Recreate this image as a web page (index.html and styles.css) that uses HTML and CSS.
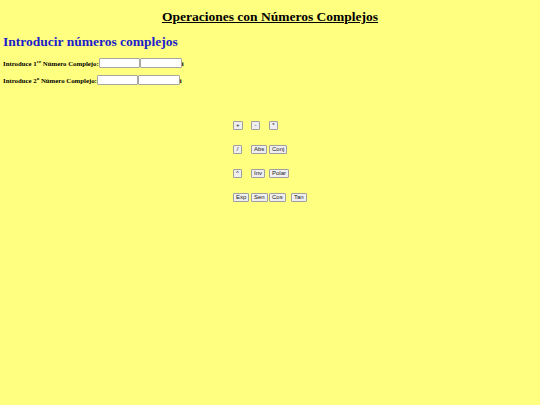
FILE: index.html
```html
<!DOCTYPE html>
<html lang="es">

<head>
  <meta charset="UTF-8">
  <title>Operaciones con Números Complejos</title>
  <link rel="stylesheet" href="styles.css">
</head>

<body>
  <h1 class="titulo">Operaciones con Números Complejos</h1>
  <h2 class="subtitulo">Introducir números complejos</h2>

  <form class="numeros">
    <div class="fila">
      <label>Introduce 1<sup>er</sup> Número Complejo:</label><input type="text"><input type="text"><span>i</span>
    </div>
    <div class="fila">
      <label>Introduce 2<sup>o</sup> Número Complejo:</label><input type="text"><input type="text"><span>i</span>
    </div>
  </form>

  <div class="botones">
    <div class="linea">
      <button type="button">+</button>
      <button type="button">-</button>
      <button type="button">*</button>
    </div>
    <div class="linea">
      <button type="button">/</button>
      <button type="button">Abs</button>
      <button type="button">Conj</button>
    </div>
    <div class="linea">
      <button type="button">^</button>
      <button type="button">Inv</button>
      <button type="button">Polar</button>
    </div>
    <div class="linea">
      <button type="button">Exp</button>
      <button type="button">Sen</button>
      <button type="button">Cos</button>
      <button type="button">Tan</button>
    </div>
  </div>
</body>

</html>
```

FILE: styles.css
```css
body {
  margin: 0;
  height: 405px;
  overflow: hidden;
  background-color: #ffff80;
  color: #000;
  font-family: "Liberation Serif", serif;
}

.titulo {
  margin: 0;
  padding-top: 9px;
  font-size: 13.5px;
  line-height: 16px;
  text-align: center;
  text-decoration: underline;
}

.subtitulo {
  margin: 0;
  padding: 9px 0 0 3px;
  font-size: 13.5px;
  line-height: 16px;
  color: #1c1ccc;
}

.numeros {
  padding: 8px 0 0 3px;
}

.fila {
  display: flex;
  align-items: center;
  height: 10px;
  margin-bottom: 7px;
  font-size: 6.8px;
  font-weight: bold;
}

.fila sup {
  font-size: 5px;
  line-height: 0;
}

.fila input {
  box-sizing: border-box;
  width: 41.5px;
  height: 9.5px;
  margin: 0;
  padding: 0;
  background-color: #fff;
  border: 1px solid #a8a8a0;
  border-radius: 1px;
}

.botones {
  display: flex;
  flex-direction: column;
  gap: 15px;
  margin: 36px 0 0 233px;
}

.linea {
  display: grid;
  grid-template-columns: 18px 18px 22px auto;
  justify-content: start;
}

.linea button {
  justify-self: start;
  min-width: 9px;
  height: 9px;
  margin: 0;
  padding: 0 2px;
  font-family: "Liberation Sans", sans-serif;
  font-size: 6px;
  line-height: 7px;
  color: #222;
  background-color: #efefef;
  border: 1px solid #a0a0a0;
  border-radius: 1px;
}
```
